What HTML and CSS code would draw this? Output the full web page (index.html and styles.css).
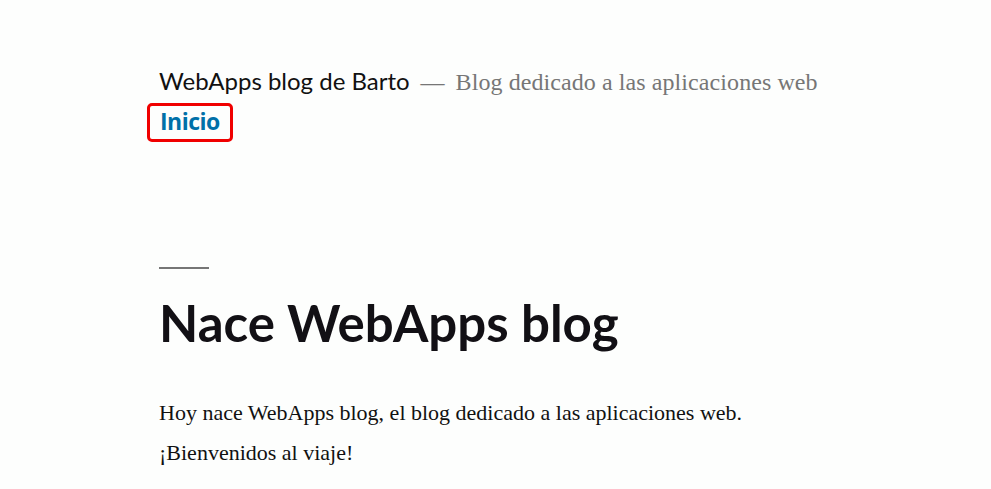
FILE: index.html
```html
<!DOCTYPE html>
<html lang="es">
<head>
<meta charset="utf-8">
<title>WebApps blog de Barto</title>
<link rel="stylesheet" href="styles.css">
</head>
<body>
<div class="page">
  <header class="site-header">
    <div class="branding">
      <span class="site-title">WebApps blog de Barto</span>
      <span class="sep">—</span>
      <span class="tagline">Blog dedicado a las aplicaciones web</span>
    </div>
    <nav class="nav">
      <a class="nav-link" href="#">Inicio</a>
    </nav>
  </header>
  <main class="content">
    <hr class="rule">
    <h1 class="entry-title">Nace WebApps blog</h1>
    <p class="text">Hoy nace WebApps blog, el blog dedicado a las aplicaciones web.</p>
    <p class="text">¡Bienvenidos al viaje!</p>
  </main>
</div>
</body>
</html>
```
FILE: styles.css
```css
html, body {
  margin: 0;
  padding: 0;
  background: #fdfefd;
}
body {
  font-family: "Liberation Serif", serif;
  color: #111;
}
.page {
  padding: 66px 0 0 159px;
}
.branding {
  display: flex;
  align-items: baseline;
  height: 30px;
}
.site-title {
  font-family: "Lato", sans-serif;
  font-size: 24px;
  color: #111;
}
.sep {
  font-family: "Liberation Serif", serif;
  font-size: 24px;
  color: #767676;
  margin: 0 11px;
}
.tagline {
  font-family: "Liberation Serif", serif;
  font-size: 24px;
  color: #767676;
  letter-spacing: 0.08px;
}
.nav {
  display: flex;
  margin-top: 7px;
}
.nav-link {
  display: block;
  margin-left: -12px;
  padding: 0 10px 2px;
  height: 31px;
  line-height: 31px;
  border: 3px solid #f00000;
  border-radius: 5px;
  font-family: "Open Sans", sans-serif;
  font-weight: 700;
  font-size: 23px;
  color: #0070a8;
  text-decoration: none;
  letter-spacing: -0.5px;
}
.content {
  padding-top: 125px;
}
.rule {
  width: 50px;
  height: 0;
  margin: 0;
  border: 0;
  border-top: 2px solid #767676;
}
.entry-title {
  font-family: "Lato", sans-serif;
  font-weight: 700;
  font-size: 51px;
  line-height: 1;
  margin: 28px 0 0;
  color: #121015;
}
.text {
  font-size: 22px;
  margin: 52px 0 0;
  line-height: 1.2;
}
.text + .text {
  margin-top: 14px;
}
```
